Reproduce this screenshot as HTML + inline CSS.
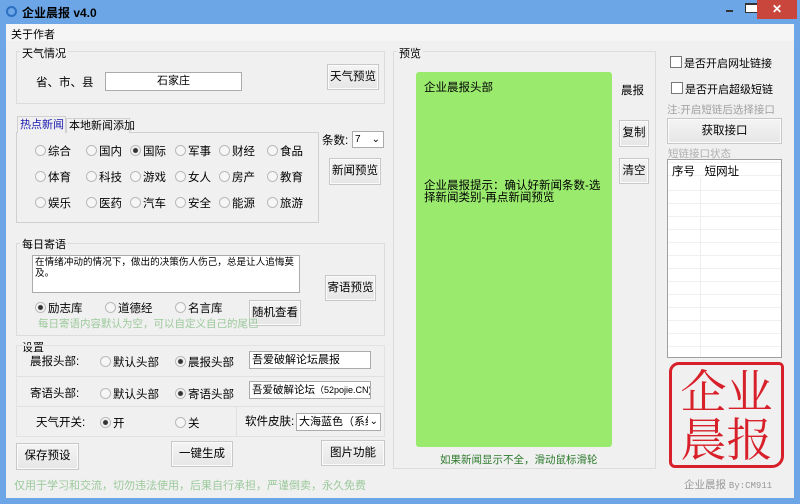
<!DOCTYPE html><html><head><meta charset="utf-8"><style>
*{box-sizing:border-box;margin:0;padding:0}
body{width:800px;height:504px;position:relative;overflow:hidden;background:#6ca6e6;font-family:"Liberation Sans","Noto Sans CJK SC",sans-serif;font-size:12px;color:#000}
.a{position:absolute;white-space:nowrap}
.client{position:absolute;left:6px;top:24px;width:788px;height:474px;background:#f0f0f0}
.grp{position:absolute;border:1px solid #dcdcdc;}
.lbl{position:absolute;background:#f0f0f0;padding:0 2px;font-size:11px}
.btn{position:absolute;border:1px solid #c8c8c8;background:linear-gradient(#f4f4f4,#e6e6e6);text-align:center;font-size:11.5px;box-shadow:inset 0 0 0 1px #fbfbfb}
.inp{position:absolute;background:#fff;border:1px solid #ababab;font-size:11px;white-space:nowrap}
.r{position:absolute;font-size:11.5px;white-space:nowrap}
.r:before{content:"";display:inline-block;width:9px;height:9px;border:1px solid #b9b9b9;border-radius:50%;background:#f6f6f6;margin-right:2px;vertical-align:-1px}
.r.on:before{background:radial-gradient(#333 2px,#f6f6f6 3px)}
.cb:before{content:"";display:inline-block;width:10px;height:10px;border:1px solid #777;background:#fff;margin-right:2px;vertical-align:-1px}
</style></head><body>
<div class="a" style="left:6px;top:6px;width:11px;height:11px;border:2px solid #2a6fc0;border-radius:50%"></div>
<div class="a" style="left:22px;top:4px;font-weight:bold;font-size:12px;color:#000">企业晨报 v4.0</div>
<div class="a" style="left:726px;top:10px;width:7px;height:2px;background:#333"></div>
<div class="a" style="left:745px;top:3px;width:13px;height:10px;border:1px solid #333;border-top-width:2px;background:#fff"></div>
<div class="a" style="left:757px;top:0;width:40px;height:19px;background:#c9463d;color:#fff;text-align:center;font-weight:bold;font-size:12px;line-height:18px">✕</div>
<div class="client"></div>
<div class="a" style="left:6px;top:24px;width:788px;height:17px;background:#f5f5f5"></div>
<div class="a" style="left:11px;top:26px;font-size:11px">关于作者</div>

<div class="grp" style="left:16px;top:51px;width:369px;height:53px"></div>
<div class="lbl" style="left:20px;top:45px">天气情况</div>
<div class="a" style="left:36px;top:74px;font-size:11.5px">省、市、县</div>
<div class="inp" style="left:105px;top:72px;width:137px;height:19px;text-align:center;line-height:17px">石家庄</div>
<div class="btn" style="left:327px;top:64px;width:52px;height:26px;line-height:24px">天气预览</div>

<div class="a" style="left:16px;top:132px;width:303px;height:91px;border:1px solid #d0d0d0;background:#f0f0f0"></div>
<div class="a" style="left:17px;top:116px;width:49px;height:17px;border:1px solid #d0d0d0;border-bottom:none;background:#f0f0f0;color:#1a1ab0;font-size:11px;padding-left:2px;line-height:16px">热点新闻</div>
<div class="a" style="left:66px;top:118px;width:64px;height:15px;border:1px solid #d0d0d0;border-bottom:none;background:#f0f0f0;font-size:11px;padding-left:2px;line-height:14px">本地新闻添加</div>
<div class="r" style="left:35px;top:143px">综合</div><div class="r" style="left:86px;top:143px">国内</div><div class="r on" style="left:130px;top:143px">国际</div><div class="r" style="left:175px;top:143px">军事</div><div class="r" style="left:219px;top:143px">财经</div><div class="r" style="left:267px;top:143px">食品</div>
<div class="r" style="left:35px;top:169px">体育</div><div class="r" style="left:86px;top:169px">科技</div><div class="r" style="left:130px;top:169px">游戏</div><div class="r" style="left:175px;top:169px">女人</div><div class="r" style="left:219px;top:169px">房产</div><div class="r" style="left:267px;top:169px">教育</div>
<div class="r" style="left:35px;top:195px">娱乐</div><div class="r" style="left:86px;top:195px">医药</div><div class="r" style="left:130px;top:195px">汽车</div><div class="r" style="left:175px;top:195px">安全</div><div class="r" style="left:219px;top:195px">能源</div><div class="r" style="left:267px;top:195px">旅游</div>
<div class="a" style="left:322px;top:132px;font-size:11.5px">条数:</div>
<div class="inp" style="left:352px;top:131px;width:32px;height:17px;font-size:10px;padding-left:2px;line-height:15px">7<span style="position:absolute;right:3px">⌄</span></div>
<div class="btn" style="left:329px;top:158px;width:52px;height:27px;line-height:25px">新闻预览</div>

<div class="grp" style="left:16px;top:243px;width:369px;height:93px"></div>
<div class="lbl" style="left:20px;top:236px">每日寄语</div>
<div class="inp" style="left:32px;top:255px;width:268px;height:38px;padding:1px 2px;white-space:normal;line-height:11px;font-size:9.6px">在情绪冲动的情况下，做出的决策伤人伤己，总是让人追悔莫及。</div>
<div class="btn" style="left:325px;top:275px;width:51px;height:26px;line-height:24px">寄语预览</div>
<div class="r on" style="left:35px;top:300px">励志库</div><div class="r" style="left:105px;top:300px">道德经</div><div class="r" style="left:175px;top:300px">名言库</div>
<div class="btn" style="left:249px;top:300px;width:52px;height:26px;line-height:24px">随机查看</div>
<div class="a" style="left:38px;top:316px;color:#9cc99c;font-size:10.5px">每日寄语内容默认为空，可以自定义自己的尾巴</div>

<div class="a" style="left:22px;top:339px;font-size:11px">设置</div>
<div class="grp" style="left:16px;top:345px;width:369px;height:92px;border-color:#e2e2e2"></div>
<div class="a" style="left:17px;top:376px;width:367px;height:1px;background:#e0e0e0"></div>
<div class="a" style="left:17px;top:406px;width:367px;height:1px;background:#e0e0e0"></div>
<div class="a" style="left:236px;top:407px;width:1px;height:30px;background:#e0e0e0"></div>
<div class="a" style="left:30px;top:353px;font-size:11.5px">晨报头部:</div>
<div class="r" style="left:100px;top:354px">默认头部</div><div class="r on" style="left:175px;top:354px">晨报头部</div>
<div class="inp" style="left:249px;top:351px;width:122px;height:18px;padding-left:2px;line-height:16px">吾爱破解论坛晨报</div>
<div class="a" style="left:30px;top:385px;font-size:11.5px">寄语头部:</div>
<div class="r" style="left:100px;top:386px">默认头部</div><div class="r on" style="left:175px;top:386px">寄语头部</div>
<div class="inp" style="left:249px;top:381px;width:122px;height:18px;padding-left:2px;line-height:16px;font-size:10.5px;overflow:hidden">吾爱破解论坛<span style="font-size:9px">（52pojie.CN)</span></div>
<div class="a" style="left:36px;top:414px;font-size:11.5px">天气开关:</div>
<div class="r on" style="left:100px;top:415px">开</div><div class="r" style="left:175px;top:415px">关</div>
<div class="a" style="left:245px;top:413px;font-size:11.5px">软件皮肤:</div>
<div class="inp" style="left:296px;top:413px;width:85px;height:18px;padding-left:2px;line-height:16px;overflow:hidden">大海蓝色（系统<span style="position:absolute;right:0;top:0;padding:0 2px;background:#fff;font-size:10px">⌄</span></div>
<div class="btn" style="left:16px;top:443px;width:63px;height:27px;line-height:25px">保存预设</div>
<div class="btn" style="left:171px;top:441px;width:62px;height:26px;line-height:24px">一键生成</div>
<div class="btn" style="left:321px;top:440px;width:64px;height:26px;line-height:24px">图片功能</div>
<div class="a" style="left:14px;top:477px;color:#9cc99c;font-size:11px">仅用于学习和交流，切勿违法使用，后果自行承担，严谨倒卖，永久免费</div>

<div class="grp" style="left:393px;top:51px;width:263px;height:418px"></div>
<div class="lbl" style="left:397px;top:45px">预览</div>
<div class="a" style="left:416px;top:72px;width:196px;height:375px;background:#9aea6e;border-radius:3px"></div>
<div class="a" style="left:424px;top:79px;font-size:11.5px">企业晨报头部</div>
<div class="a" style="left:424px;top:180px;font-size:11.5px;white-space:normal;width:186px;line-height:12px">企业晨报提示：确认好新闻条数-选择新闻类别-再点新闻预览</div>
<div class="a" style="left:621px;top:82px;font-size:11.5px">晨报</div>
<div class="btn" style="left:619px;top:120px;width:30px;height:27px;line-height:25px">复制</div>
<div class="btn" style="left:619px;top:158px;width:30px;height:26px;line-height:24px">清空</div>
<div class="a" style="left:440px;top:452px;color:#2d7a2d;font-size:10.5px">如果新闻显示不全，滑动鼠标滑轮</div>

<div class="a cb" style="left:670px;top:55px;font-size:11px">是否开启网址链接</div>
<div class="a cb" style="left:671px;top:81px;font-size:11px">是否开启超级短链</div>
<div class="a" style="left:667px;top:102px;color:#a0a0a0;font-size:10.5px">注:开启短链后选择接口</div>
<div class="btn" style="left:667px;top:118px;width:115px;height:26px;line-height:24px">获取接口</div>
<div class="a" style="left:668px;top:146px;color:#b0b0b0;font-size:10.5px">短链接口状态</div>
<div class="a" style="left:667px;top:159px;width:115px;height:199px;background:#fff;border:1px solid #a0a0a0;background-image:linear-gradient(90deg,transparent 32px,#eee 32px,#eee 33px,transparent 33px),repeating-linear-gradient(transparent 0 12px,#f0f0f0 12px 13px);background-position:0 18px;background-repeat:no-repeat,repeat"></div>
<div class="a" style="left:672px;top:163px;font-size:11.5px">序号&nbsp;&nbsp;&nbsp;短网址</div>
<div class="a" style="left:669px;top:362px;width:115px;height:106px;border:3px solid #d8202a;border-radius:10px 5px 12px 6px;color:#d8202a;font-family:'Noto Serif CJK SC',serif;font-size:46px;line-height:48px;text-align:center;padding-top:0;letter-spacing:0;white-space:normal;overflow:hidden">企业<br>晨报</div>
<div class="a" style="left:684px;top:477px;color:#999;font-size:10.5px">企业晨报 <span style="font-family:'Liberation Mono',monospace;font-size:9px">By:CM911</span></div>
</body></html>
